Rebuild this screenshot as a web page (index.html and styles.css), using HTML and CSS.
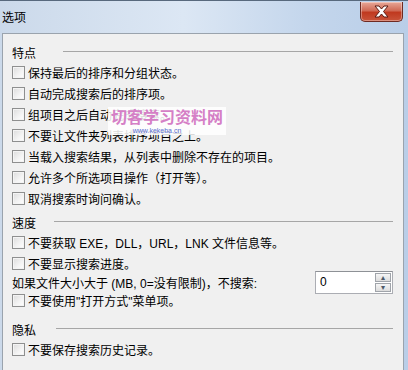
FILE: index.html
```html
<!DOCTYPE html>
<html lang="zh-CN">
<head>
    <meta charset="UTF-8">
    <title>选项</title>
    <link rel="stylesheet" href="styles.css">
</head>
<body>
    <div id="window">
        <div class="titlebar">
            <span class="title">选项</span>
            <button type="button" class="close-button">
                <svg width="17" height="13" viewBox="0 0 17 13">
                    <path d="M2 1h4l2.5 3 2.5-3h4l-4.5 5.5 4.5 5.5h-4l-2.5-3-2.5 3h-4l4.5-5.5z" fill="#fff" stroke="#5a1a12" stroke-width="1" stroke-linejoin="round"/>
                </svg>
            </button>
        </div>

        <div class="panel">
            <div class="group-head first">
                <span>特点</span>
                <span class="rule"></span>
            </div>
            <label class="row"><span class="box"></span>保持最后的排序和分组状态。</label>
            <label class="row"><span class="box"></span>自动完成搜索后的排序项。</label>
            <label class="row"><span class="box"></span>组项目之后自动完成搜索。</label>
            <label class="row"><span class="box"></span>不要让文件夹列表排序项目之上。</label>
            <label class="row"><span class="box"></span>当载入搜索结果，从列表中删除不存在的项目。</label>
            <label class="row"><span class="box"></span>允许多个所选项目操作（打开等）。</label>
            <label class="row"><span class="box"></span>取消搜索时询问确认。</label>

            <div class="group-head">
                <span>速度</span>
                <span class="rule"></span>
            </div>
            <label class="row"><span class="box"></span>不要获取 EXE，DLL，URL，LNK 文件信息等。</label>
            <label class="row"><span class="box"></span>不要显示搜索进度。</label>
            <div class="row spin-row">
                <span>如果文件大小大于 (MB, 0=没有限制)，不搜索:</span>
                <div class="spinbox">
                    <span class="spin-value">0</span>
                    <div class="spin-buttons">
                        <span class="spin-btn">&#9652;</span>
                        <span class="spin-btn">&#9662;</span>
                    </div>
                </div>
            </div>
            <label class="row"><span class="box"></span>不要使用"打开方式"菜单项。</label>

            <div class="group-head privacy">
                <span>隐私</span>
                <span class="rule"></span>
            </div>
            <label class="row"><span class="box"></span>不要保存搜索历史记录。</label>
        </div>

        <div class="watermark">
            <span class="wm-title">切客学习资料网</span>
            <span class="wm-url">www.kekeba.cn</span>
        </div>
    </div>
</body>
</html>
```

FILE: styles.css
```css
body {
    margin: 0;
    padding: 0;
    background-color: #c9d8ea;
    font-family: "Liberation Sans", "Noto Sans CJK SC", sans-serif;
    font-size: 12px;
    color: #000;
    overflow: hidden;
}
#window {
    position: relative;
    width: 408px;
    height: 370px;
    overflow: hidden;
    background: linear-gradient(to right, #cbd9ea, #dce7f4 45%, #c4d6ec 75%, #b9cee8);
    border-top: 1px solid #58697d;
    box-sizing: border-box;
}
.titlebar {
    height: 32px;
    display: flex;
    justify-content: space-between;
    align-items: flex-start;
    padding: 0 5px 0 2px;
}
.title {
    margin-top: 9px;
    font-size: 12px;
    line-height: 16px;
}
.close-button {
    width: 43px;
    height: 20px;
    margin-top: 1px;
    padding: 0;
    border: 1px solid #6e2a22;
    border-top: none;
    border-radius: 0 0 5px 5px;
    background: linear-gradient(#e8a898, #d06a55 45%, #c0391f 55%, #c9543a);
    display: flex;
    justify-content: center;
    align-items: center;
    box-shadow: inset 0 0 0 1px rgba(255, 255, 255, 0.35);
}
.panel {
    margin: 0 4px 0 2px;
    height: 400px;
    background-color: #f0f0f0;
    border: 1px solid #9aa3ad;
    padding: 8px 10px 0 9px;
    display: flex;
    flex-direction: column;
}
.group-head {
    height: 20px;
    display: flex;
    align-items: center;
    gap: 18px;
    margin-top: 3px;
}
.group-head.first {
    margin-top: 0;
    gap: 27px;
}
.group-head.privacy {
    margin-top: 8px;
    gap: 20px;
}
.rule {
    flex: 1;
    height: 1px;
    background-color: #a6a6a6;
    margin-top: -1px;
}
.row {
    height: 21px;
    display: flex;
    align-items: center;
    white-space: nowrap;
}
.box {
    width: 11px;
    height: 11px;
    border: 1px solid #8e8f8f;
    background: linear-gradient(135deg, #dcdcdc, #f4f4f4 60%, #fff);
    box-shadow: inset 0 0 0 1px #f4f4f4;
    margin-right: 3px;
    flex: none;
}
.spin-row {
    height: 16px;
}
.spinbox {
    margin-left: auto;
    width: 78px;
    height: 23px;
    box-sizing: border-box;
    border: 1px solid #abadb3;
    border-top-color: #8e9196;
    background-color: #fff;
    display: flex;
    align-items: center;
}
.spin-value {
    flex: 1;
    padding-left: 4px;
}
.spin-buttons {
    width: 16px;
    height: 19px;
    display: flex;
    flex-direction: column;
    gap: 1px;
    margin-right: 1px;
}
.spin-btn {
    flex: 1;
    border: 1px solid #a0a4aa;
    background: linear-gradient(#f6f6f6, #dcdcdc);
    font-size: 8px;
    line-height: 7px;
    color: #4d5a6a;
    text-align: center;
}
.watermark {
    position: absolute;
    left: 108px;
    top: 106px;
    display: flex;
    flex-direction: column;
    align-items: center;
    background-color: rgba(255, 255, 255, 0.85);
    padding: 1px 3px 0;
}
.wm-title {
    font-size: 16px;
    line-height: 19px;
    font-weight: bold;
    color: #d57fc6;
    letter-spacing: 0;
}
.wm-url {
    font-size: 7px;
    line-height: 8px;
    color: #5b6fd0;
    margin-left: -20px;
}
```
